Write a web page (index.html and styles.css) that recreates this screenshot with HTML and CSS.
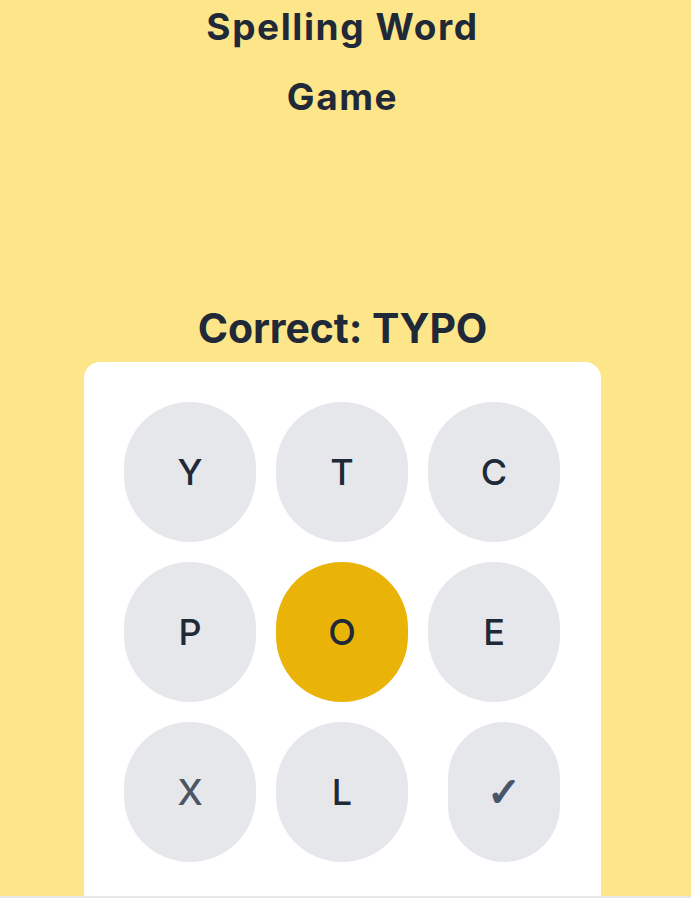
FILE: index.html
```html
<!DOCTYPE html>
<html lang="en">
<head>
<meta charset="utf-8">
<title>Spelling Word Game</title>
<link rel="stylesheet" href="styles.css">
</head>
<body>
<main class="page">
  <h1 class="title">Spelling Word Game</h1>
  <h2 class="status">Correct: TYPO</h2>
  <section class="card">
    <div class="grid">
      <button class="key">Y</button>
      <button class="key">T</button>
      <button class="key">C</button>
      <button class="key">P</button>
      <button class="key key-active">O</button>
      <button class="key">E</button>
      <button class="key key-muted">X</button>
      <button class="key">L</button>
      <button class="key key-check key-muted">✓</button>
    </div>
  </section>
</main>
<div class="bottom-rule"></div>
</body>
</html>
```
FILE: styles.css
```css
html, body {
  margin: 0;
  padding: 0;
}
body {
  background: #fde68a;
  font-family: Inter, "Open Sans", sans-serif;
  color: #1f2937;
  overflow: hidden;
}
.page {
  display: flex;
  flex-direction: column;
  align-items: center;
  padding-right: 6px;
}
.title {
  margin: -8px 0 0;
  width: 320px;
  text-align: center;
  font-size: 37px;
  line-height: 70px;
  font-weight: 700;
  letter-spacing: 1.6px;
}
.status {
  margin: 172px 0 0;
  font-size: 41px;
  line-height: 48px;
  font-weight: 700;
  letter-spacing: -0.1px;
}
.card {
  margin-top: 10px;
  background: #ffffff;
  border-radius: 16px;
  padding: 40px 40px 80px;
  width: 437px;
}
.grid {
  display: grid;
  grid-template-columns: repeat(3, 132px);
  grid-auto-rows: 140px;
  gap: 20px;
}
.key {
  border: none;
  background: #e5e7eb;
  border-radius: 9999px;
  font-family: Inter, "Open Sans", sans-serif;
  font-size: 36px;
  font-weight: 500;
  color: #1f2937;
  padding: 0;
  cursor: pointer;
}
.key-active {
  background: #eab308;
}
.key-muted {
  color: #4b5563;
}
.key-check {
  width: 112px;
  justify-self: end;
  font-family: "DejaVu Sans", sans-serif;
  font-size: 40px;
  font-weight: 700;
  color: #475569;
  -webkit-text-stroke: 1.6px #475569;
}
.bottom-rule {
  position: fixed;
  left: 0;
  right: 0;
  bottom: 0;
  height: 2px;
  background: #e5e7eb;
}
```
